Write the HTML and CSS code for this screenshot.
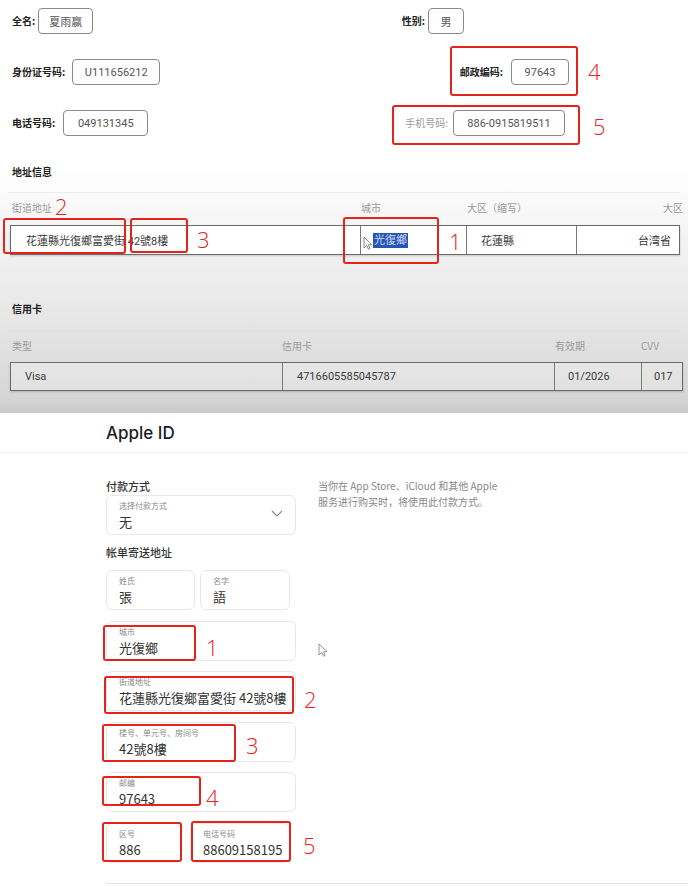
FILE: index.html
```html
<!DOCTYPE html>
<html lang="zh">
<head>
<meta charset="utf-8">
<title>Address comparison</title>
<link rel="stylesheet" href="styles.css">
</head>
<body>
<div class="page">
  <section class="top">
    <div class="row">
      <div class="pair"><span class="lbl">全名:</span><span class="box w55">夏雨赢</span></div>
      <div class="pair right r1"><span class="lbl">性别:</span><span class="box w36">男</span></div>
    </div>
    <div class="row">
      <div class="pair"><span class="lbl">身份证号码:</span><span class="box w88">U111656212</span></div>
      <div class="pair right r2"><span class="lbl">邮政编码:</span><span class="box w58">97643</span></div>
    </div>
    <div class="row">
      <div class="pair"><span class="lbl">电话号码:</span><span class="box w85">049131345</span></div>
      <div class="pair right r3"><span class="lbl muted">手机号码:</span><span class="box w112">886-0915819511</span></div>
    </div>

    <h3 class="sec first">地址信息</h3>
    <div class="rule"></div>
    <div class="addr cols-labels">
      <span>街道地址</span><span>城市</span><span>大区（缩写）</span><span class="end">大区</span>
    </div>
    <div class="addr table white">
      <span class="cell">花蓮縣光復鄉富愛街 42號8樓</span>
      <span class="cell city"><svg class="tcursor" width="9" height="14" viewBox="0 0 9 14"><path d="M1 1 L1 12 L3.6 9.4 L5.4 13.2 L7 12.5 L5.3 8.8 L8.5 8.6 Z" fill="#fff" stroke="#777" stroke-width="0.9"/></svg><mark class="sel">光復鄉</mark></span>
      <span class="cell">花蓮縣</span>
      <span class="cell end">台湾省</span>
    </div>

    <h3 class="sec second">信用卡</h3>
    <div class="rule"></div>
    <div class="card cols-labels">
      <span>类型</span><span>信用卡</span><span>有效期</span><span>CVV</span>
    </div>
    <div class="card table">
      <span class="cell">Visa</span>
      <span class="cell">4716605585045787</span>
      <span class="cell">01/2026</span>
      <span class="cell">017</span>
    </div>

    <div class="ann" style="left:450px;top:46px;width:128px;height:50px"></div>
    <div class="ann" style="left:392px;top:105px;width:188px;height:40px"></div>
    <div class="ann" style="left:3px;top:218px;width:123px;height:36px"></div>
    <div class="ann" style="left:130px;top:218px;width:58px;height:35px"></div>
    <div class="ann" style="left:343px;top:217px;width:96px;height:47px"></div>
    <span class="num" style="left:588px;top:60px">4</span>
    <span class="num" style="left:593px;top:115px">5</span>
    <span class="num" style="left:55px;top:195px">2</span>
    <span class="num" style="left:197px;top:228px">3</span>
    <span class="num" style="left:449px;top:230px">1</span>
  </section>

  <section class="bottom">
    <h1 class="title">Apple ID</h1>
    <div class="brule"></div>
    <div class="content">
      <div class="form">
        <h4 class="flabel">付款方式</h4>
        <div class="field select">
          <div class="ftext"><span class="small">选择付款方式</span><span class="val">无</span></div>
          <svg class="chev" width="12" height="7" viewBox="0 0 12 7"><path d="M1 1 L6 6 L11 1" fill="none" stroke="#888" stroke-width="1.1"/></svg>
        </div>
        <h4 class="flabel addr-title">帐单寄送地址</h4>
        <div class="fields">
          <div class="pairrow">
            <div class="field w89"><span class="small">姓氏</span><span class="val">張</span></div>
            <div class="field w90"><span class="small">名字</span><span class="val">語</span></div>
          </div>
          <div class="field"><span class="small">城市</span><span class="val">光復鄉</span></div>
          <div class="field"><span class="small">街道地址</span><span class="val">花蓮縣光復鄉富愛街 42號8樓</span></div>
          <div class="field"><span class="small">楼号、单元号、房间号</span><span class="val">42號8樓</span></div>
          <div class="field"><span class="small">邮编</span><span class="val">97643</span></div>
          <div class="pairrow wide">
            <div class="field w76"><span class="small">区号</span><span class="val">886</span></div>
            <div class="field w100"><span class="small">电话号码</span><span class="val">88609158195</span></div>
          </div>
        </div>
      </div>
      <p class="note">当你在 App Store、iCloud 和其他 Apple<br>服务进行购买时，将使用此付款方式。</p>
    </div>
    <div class="endrule"></div>

    <svg class="mcursor" width="10" height="14" viewBox="0 0 10 14"><path d="M1 1 L1 12 L3.8 9.4 L5.6 13.2 L7.2 12.5 L5.5 8.8 L9 8.6 Z" fill="#fff" stroke="#888" stroke-width="0.9"/></svg>
  </section>

  <div class="ann" style="left:103px;top:625px;width:93px;height:36px"></div>
  <div class="ann" style="left:104px;top:676px;width:190px;height:38px"></div>
  <div class="ann" style="left:102px;top:724px;width:134px;height:38px"></div>
  <div class="ann" style="left:102px;top:776px;width:99px;height:30px"></div>
  <div class="ann" style="left:102px;top:822px;width:80px;height:40px"></div>
  <div class="ann" style="left:191px;top:821px;width:100px;height:41px"></div>
  <span class="num" style="left:206px;top:636px">1</span>
  <span class="num" style="left:304px;top:688px">2</span>
  <span class="num" style="left:246px;top:734px">3</span>
  <span class="num" style="left:206px;top:786px">4</span>
  <span class="num" style="left:303px;top:834px">5</span>
</div>
</body>
</html>
```
FILE: styles.css
```css
* { box-sizing: border-box; }
html, body { margin: 0; padding: 0; }
body {
  width: 688px;
  height: 887px;
  overflow: hidden;
  font-family: "Noto Sans CJK SC", "Noto Sans", sans-serif;
  color: #222;
  background: #fff;
}
.page { position: relative; width: 688px; height: 887px; }

/* ---------- top panel ---------- */
.top {
  position: relative;
  height: 413px;
  padding: 8px 0 0 0;
  background: linear-gradient(to bottom, #ffffff 0%, #ffffff 40%, #f3f3f3 58%, #e6e6e6 78%, #d6d6d6 96%, #c9c9c9 100%);
}
.row {
  display: flex;
  align-items: center;
  height: 26px;
  margin-bottom: 25px;
  padding-left: 12px;
}
.pair { display: flex; align-items: center; gap: 3px; }
.pair.right { margin-left: auto; }
.r1 { margin-right: 224px; }
.r2 { margin-right: 119px; gap: 8px; }
.r3 { margin-right: 123px; gap: 5px; }
.row:nth-child(2) .pair:first-child { gap: 7px; }
.row:nth-child(3) .pair:first-child { gap: 8px; }
.lbl { font-size: 10px; font-weight: 700; color: #222; line-height: 14px; }
.lbl.muted { font-weight: 400; color: #9a9a9a; }
.box {
  display: flex;
  align-items: center;
  justify-content: center;
  height: 26px;
  border: 1.5px solid #8a8a8a;
  border-radius: 4px;
  font-size: 11px;
  color: #555;
  background: #fff;
  font-family: "Roboto", "Noto Sans CJK SC", sans-serif;
}
.w36 { width: 36px; }
.w55 { width: 55px; }
.w58 { width: 58px; }
.w85 { width: 85px; }
.w88 { width: 88px; }
.w112 { width: 112px; }

.sec {
  margin: 0;
  padding-left: 12px;
  font-size: 10px;
  line-height: 14px;
  font-weight: 700;
  color: #222;
}
.sec.first { margin-top: 29px; }
.sec.second { margin-top: 47px; }
.rule {
  height: 1px;
  margin: 13px 8px 0 8px;
  background: #ececec;
}
.sec.second + .rule { margin-top: 14px; background: #dedede; }

.addr, .card { display: grid; margin-left: 10px; }
.addr { grid-template-columns: 349px 106px 110px 105px; width: 670px; }
.card { grid-template-columns: 271px 272px 87px 43px; width: 673px; }
.cols-labels {
  margin-top: 8px;
  font-size: 10px;
  line-height: 14px;
  color: #9a9a9a;
}
.cols-labels span { padding-left: 2px; }
.addr.cols-labels .end { text-align: right; margin-right: -3px; }
.card.cols-labels span:nth-child(2) { padding-left: 1px; }
.card.cols-labels span:nth-child(3) { padding-left: 2px; }
.card.cols-labels span:nth-child(4) { padding-left: 1px; }

.table {
  margin-top: 10px;
  height: 30px;
  border: 1px solid #6a6a6a;
  box-shadow: 0 1px 2px rgba(0,0,0,0.18);
}
.table.white { background: #fff; }
.card.table { margin-top: 9px; height: 29px; background: rgba(255,255,255,0.25); }
.cell {
  display: flex;
  align-items: center;
  padding-left: 14px;
  font-size: 11px;
  color: #3a3a3a;
  border-left: 1px solid #7a7a7a;
  white-space: nowrap;
  font-family: "Roboto", "Noto Sans CJK SC", sans-serif;
}
.cell:first-child { border-left: none; }
.addr .cell:first-child { padding-left: 15px; }
.card .cell:first-child { padding-left: 14px; }
.cell.end { justify-content: flex-end; padding-right: 10px; }
.cell.city { padding-left: 2px; }
.tcursor { margin-right: 1px; margin-top: 6px; flex: none; }
.sel {
  background: #2756b8;
  color: #cdd7f2;
  padding: 0 1px;
  line-height: 15px;
}
.card .cell:nth-child(3) { padding-left: 13px; }
.card .cell:nth-child(4) { padding-left: 12px; }

/* ---------- annotations ---------- */
.ann {
  position: absolute;
  border: 2px solid #e5231d;
  border-radius: 3px;
}
.num {
  position: absolute;
  font-family: "Open Sans", "DejaVu Sans", sans-serif;
  font-weight: 300;
  font-size: 22px;
  line-height: 22px;
  color: #e5231d;
}

/* ---------- bottom panel ---------- */
.bottom {
  position: relative;
  height: 474px;
  padding-top: 10px;
  background: #fff;
}
.title {
  margin: 0 0 0 106px;
  font-family: "Inter", "Noto Sans", sans-serif;
  font-size: 17px;
  line-height: 20px;
  font-weight: 500;
  color: #1d1d1f;
}
.brule { height: 1px; background: #efefef; margin-top: 9px; }
.content {
  display: flex;
  gap: 22px;
  padding-left: 106px;
  margin-top: 26px;
}
.form { width: 190px; flex: none; }
.flabel {
  margin: 0;
  font-size: 11px;
  line-height: 14px;
  font-weight: 500;
  color: #333;
}
.field {
  display: flex;
  flex-direction: column;
  justify-content: center;
  gap: 0;
  height: 40px;
  padding-left: 12px;
  border: 1px solid #e8e8e8;
  border-radius: 6px;
  background: #fff;
}
.field.select {
  flex-direction: row;
  align-items: center;
  justify-content: space-between;
  margin-top: 2px;
  padding-right: 12px;
}
.ftext { display: flex; flex-direction: column; }
.chev { flex: none; margin-top: -4px; }
.small { font-size: 8px; line-height: 12px; color: #8a8a8a; white-space: nowrap; }
.val {
  font-size: 13px;
  line-height: 19px;
  color: #333;
  white-space: nowrap;
  font-family: "Noto Sans CJK SC", "Noto Sans", sans-serif;
}
.field .small { margin-top: 1px; }
.addr-title { margin-top: 10px; }
.fields {
  display: flex;
  flex-direction: column;
  gap: 10.5px;
  margin-top: 11px;
}
.pairrow { display: flex; gap: 5px; }
.pairrow.wide { gap: 8px; }
.w89 { width: 89px; }
.w90 { width: 90px; }
.w76 { width: 76px; }
.w100 { width: 100px; }
.note {
  margin: -1px 0 0 0;
  font-size: 10px;
  line-height: 16px;
  color: #888;
}
.endrule {
  height: 1px;
  background: #e4e4e4;
  margin: 20px 0 0 106px;
}
.mcursor { position: absolute; left: 318px; top: 230px; }
```
